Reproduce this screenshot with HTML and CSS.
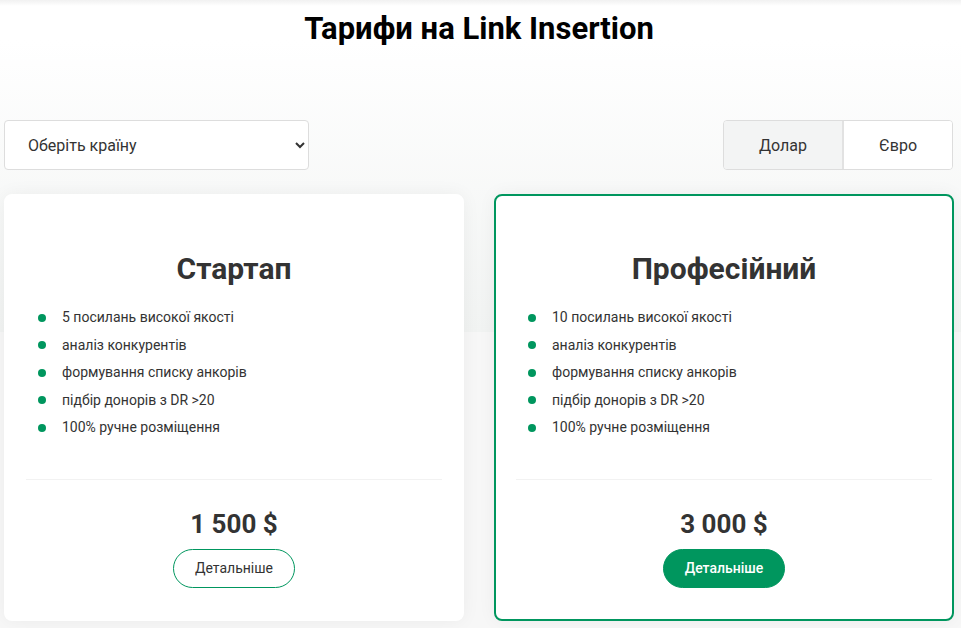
FILE: index.html
```html
<!DOCTYPE html>
<html lang="uk">
<head>
<meta charset="utf-8">
<title>Тарифи на Link Insertion</title>
<link rel="stylesheet" href="styles.css">
</head>
<body>
<main class="page">
  <h1 class="title">Тарифи на Link Insertion</h1>
  <div class="controls">
    <select class="country">
      <option>Оберіть країну</option>
      <option>Україна</option>
      <option>Польща</option>
    </select>
    <div class="currency">
      <button class="cur cur-active" type="button">Долар</button>
      <button class="cur" type="button">Євро</button>
    </div>
  </div>
  <div class="plans">
    <section class="card">
      <h2 class="card-title">Стартап</h2>
      <ul class="features">
        <li>5 посилань високої якості</li>
        <li>аналіз конкурентів</li>
        <li>формування списку анкорів</li>
        <li>підбір донорів з DR &gt;20</li>
        <li>100% ручне розміщення</li>
      </ul>
      <hr class="divider">
      <div class="price">1 500 $</div>
      <a class="more" href="#">Детальніше</a>
    </section>
    <section class="card card-featured">
      <h2 class="card-title">Професійний</h2>
      <ul class="features">
        <li>10 посилань високої якості</li>
        <li>аналіз конкурентів</li>
        <li>формування списку анкорів</li>
        <li>підбір донорів з DR &gt;20</li>
        <li>100% ручне розміщення</li>
      </ul>
      <hr class="divider">
      <div class="price">3 000 $</div>
      <a class="more more-filled" href="#">Детальніше</a>
    </section>
  </div>
</main>
</body>
</html>
```

FILE: styles.css
```css
* { box-sizing: border-box; }

html, body {
  margin: 0;
  padding: 0;
}

body {
  font-family: Roboto, "Noto Sans", Arial, sans-serif;
  color: #333;
  background-color: #f7f7f7;
  background-image:
    linear-gradient(180deg, #f1f1f1 0, #ffffff 6px, #ffffff 40px, #f1f3f2 332px, rgba(247,247,247,0) 332px);
  background-repeat: no-repeat;
  background-size: 100% 332px;
  min-height: 628px;
}

.page {
  width: 950px;
  margin-left: 4px;
  padding-top: 10px;
}

.title {
  margin: 0;
  font-size: 31px;
  line-height: 37px;
  font-weight: 700;
  color: #000;
  text-align: center;
}

.controls {
  margin-top: 73px;
  display: flex;
  justify-content: space-between;
  align-items: center;
}

.country {
  width: 305px;
  height: 50px;
  padding: 0 14px 0 19px;
  font-family: Roboto, Arial, sans-serif;
  font-size: 16px;
  color: #333;
  background: #fff;
  border: 1px solid #ddd;
  border-radius: 4px;
  outline: none;
}

.currency {
  display: flex;
  height: 50px;
  border: 1px solid #ddd;
  border-radius: 4px;
  overflow: hidden;
  margin-right: 1px;
}

.cur {
  font-family: Roboto, Arial, sans-serif;
  font-size: 16px;
  color: #333;
  background: #fff;
  border: 0;
  padding: 0 35px;
  height: 100%;
  cursor: pointer;
}

.cur + .cur { border-left: 2px solid #e2e2e2; }

.cur-active {
  background: #f3f4f4;
}

.plans {
  margin-top: 24px;
  display: grid;
  grid-template-columns: 460px 460px;
  column-gap: 30px;
}

.card {
  background: #fff;
  border: 2px solid #fff;
  border-radius: 8px;
  padding: 54px 20px 31px;
  box-shadow: 0 0 18px rgba(0, 0, 0, 0.05);
  display: flex;
  flex-direction: column;
  align-items: center;
}

.card-featured {
  border-color: #00965e;
}

.card-title {
  margin: 0;
  font-size: 30px;
  line-height: 38px;
  font-weight: 700;
  color: #333;
}

.features {
  list-style: none;
  margin: 16px 0 0;
  padding: 0;
  align-self: stretch;
}

.features li {
  display: flex;
  align-items: center;
  font-size: 14px;
  line-height: 27.5px;
  color: #333;
  padding-left: 12px;
}

.features li::before {
  content: "";
  width: 8px;
  height: 8px;
  border-radius: 50%;
  background: #00965e;
  margin-right: 16px;
  flex: none;
}

.divider {
  align-self: stretch;
  margin: 37px 0 0;
  border: 0;
  height: 1px;
  background: #f2f2f2;
}

.price {
  margin-top: 28px;
  font-size: 26px;
  line-height: 32px;
  font-weight: 700;
  color: #333;
}

.more {
  margin-top: 9px;
  display: inline-block;
  height: 39px;
  line-height: 37px;
  padding: 0 21px;
  border: 1px solid #00965e;
  border-radius: 20px;
  font-size: 14px;
  color: #333;
  text-decoration: none;
}

.more-filled {
  background: #00965e;
  color: #fff;
  font-weight: 500;
}
```
